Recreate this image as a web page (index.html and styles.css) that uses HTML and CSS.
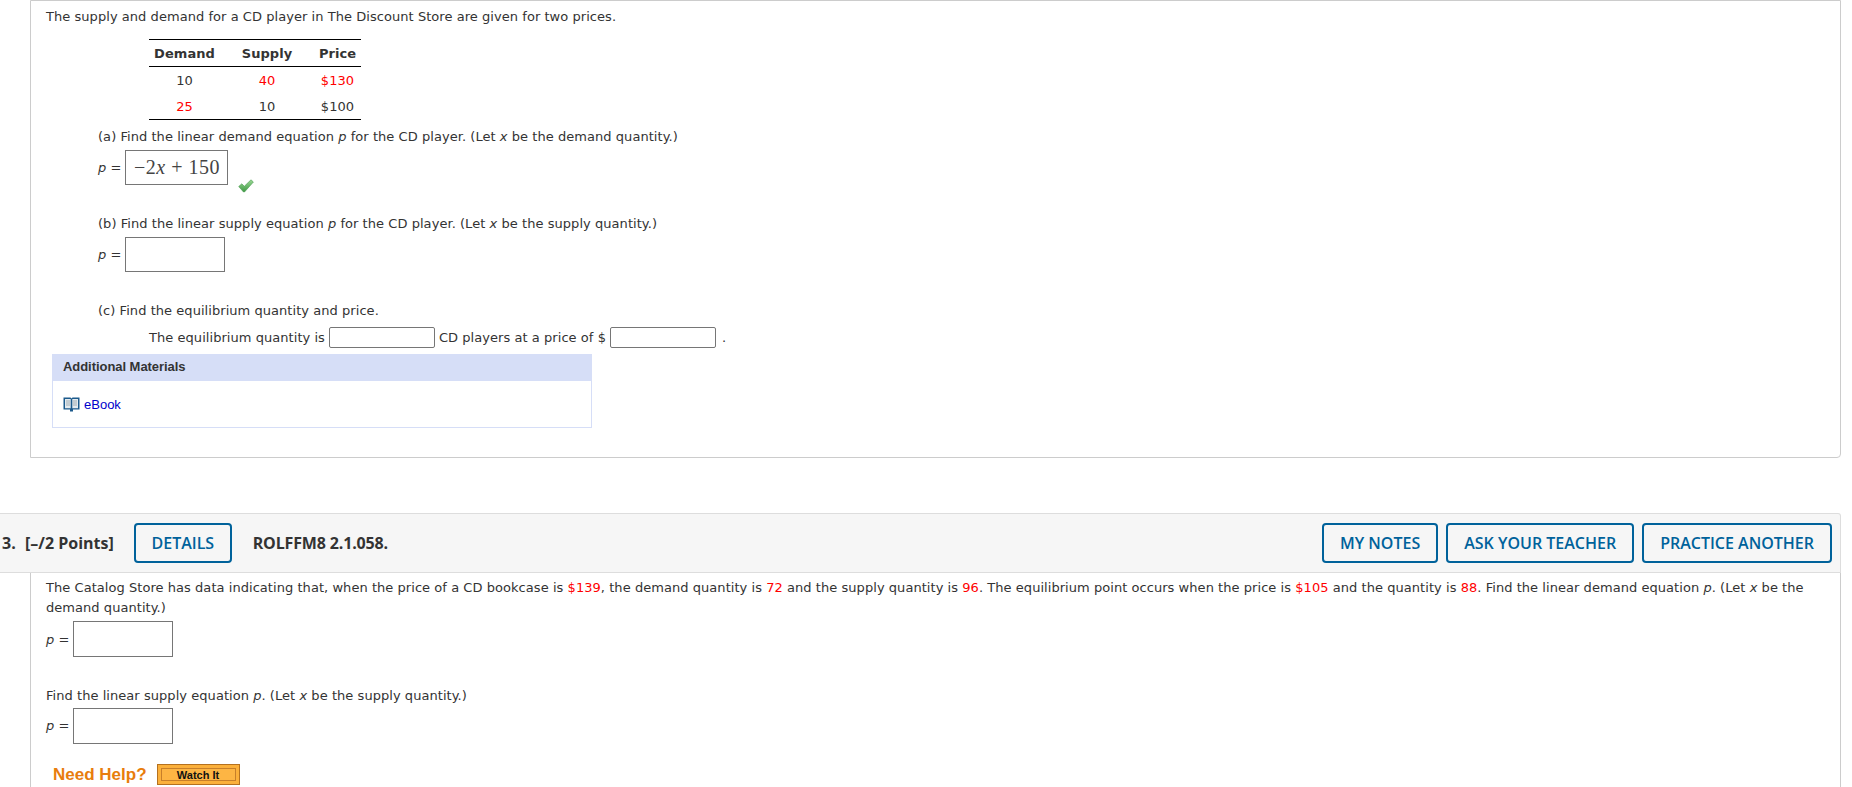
FILE: index.html
```html
<!DOCTYPE html>
<html>
<head>
  <meta charset="UTF-8">
  <title>Question 3</title>
  <link rel="stylesheet" href="styles.css">
</head>
<body>
<div class="page">
  <div class="panel first">
    <p class="line">The supply and demand for a CD player in The Discount Store are given for two prices.</p>
    <table class="prices">
      <tr><th>Demand</th><th>Supply</th><th>Price</th></tr>
      <tr><td>10</td><td class="red">40</td><td class="red">$130</td></tr>
      <tr><td class="red">25</td><td>10</td><td>$100</td></tr>
    </table>

    <p class="line part partA">(a) Find the linear demand equation <i>p</i> for the CD player. (Let <i>x</i> be the demand quantity.)</p>
    <div class="answerRow part">
      <span class="label"><i>p</i> =</span>
      <div class="box boxA"><span class="math">&minus;2<i>x</i> + 150</span></div>
      <svg class="check" width="16" height="14" viewBox="0 0 16 14">
        <defs>
          <linearGradient id="checkFill" x1="0" y1="0" x2="0" y2="1">
            <stop offset="0" stop-color="#9bd894"/>
            <stop offset="1" stop-color="#3f9a45"/>
          </linearGradient>
        </defs>
        <path d="M0.7 7.5 L3.8 4.8 L6.3 7.3 L13 0.8 L15.4 3 L6.5 13 L5.5 13 Z" fill="url(#checkFill)" stroke="#4c9a52" stroke-width="0.6"/>
      </svg>
    </div>

    <p class="line part partB">(b) Find the linear supply equation <i>p</i> for the CD player. (Let <i>x</i> be the supply quantity.)</p>
    <div class="answerRow part rowB">
      <span class="label"><i>p</i> =</span>
      <div class="box boxB"></div>
    </div>

    <p class="line part partC">(c) Find the equilibrium quantity and price.</p>
    <div class="equilRow">
      <span>The equilibrium quantity is</span>
      <div class="box small"></div>
      <span>CD players at a price of $</span>
      <div class="box small"></div>
      <span class="dot">.</span>
    </div>

    <div class="materials">
      <div class="materialsHead">Additional Materials</div>
      <div class="materialsBody">
        <svg width="17" height="15" viewBox="0 0 17 15">
          <path d="M0.5 0.5 H7.5 L8.5 1.5 L9.5 0.5 H16.5 V12.5 H10 V14.5 H7 V12.5 H0.5 Z" fill="#1c5a8c"/>
          <path d="M2 2 H7.7 V11.3 H2 Z M9.3 2 H15 V11.3 H9.3 Z" fill="#e4ebef"/>
          <path d="M3 4 H7 M3 6 H7 M3 8 H7 M10 4 H14 M10 6 H14 M10 8 H14" stroke="#a3aeb5" stroke-width="1"/>
        </svg>
        <a href="#">eBook</a>
      </div>
    </div>
  </div>

  <div class="questionBar">
    <span class="qNum">3.</span>
    <span class="qPoints">[&ndash;/2 Points]</span>
    <a class="btn details" href="#">DETAILS</a>
    <span class="qCode">ROLFFM8 2.1.058.</span>
    <div class="barRight">
      <a class="btn" href="#">MY NOTES</a>
      <a class="btn" href="#">ASK YOUR TEACHER</a>
      <a class="btn" href="#">PRACTICE ANOTHER</a>
    </div>
  </div>

  <div class="panel second">
    <p class="line">The Catalog Store has data indicating that, when the price of a CD bookcase is <span class="red">$139</span>, the demand quantity is <span class="red">72</span> and the supply quantity is <span class="red">96</span>. The equilibrium point occurs when the price is <span class="red">$105</span> and the quantity is <span class="red">88</span>. Find the linear demand equation <i>p</i>. (Let <i>x</i> be the demand quantity.)</p>
    <div class="answerRow rowD">
      <span class="label"><i>p</i> =</span>
      <div class="box boxD"></div>
    </div>
    <p class="line findSupply">Find the linear supply equation <i>p</i>. (Let <i>x</i> be the supply quantity.)</p>
    <div class="answerRow rowE">
      <span class="label"><i>p</i> =</span>
      <div class="box boxD"></div>
    </div>
    <div class="help">
      <span class="needHelp">Need Help?</span>
      <a class="watch" href="#"><span>Watch It</span></a>
    </div>
  </div>
</div>
</body>
</html>
```

FILE: styles.css
```css
html, body {
  margin: 0;
  padding: 0;
  height: 787px;
  overflow: hidden;
  background-color: #fff;
}
body {
  font-family: "DejaVu Sans", Verdana, sans-serif;
  font-size: 13px;
  letter-spacing: 0.05px;
  color: #333;
}
p {
  margin: 0;
}
.red {
  color: #f00;
}
.page {
  width: 1841px;
}
.panel {
  margin-left: 30px;
  padding-left: 15px;
  border-left: 1px solid #ccc;
  border-right: 1px solid #ccc;
}
.panel.first {
  border-top: 1px solid #ccc;
  border-bottom: 1px solid #ccc;
  border-bottom-right-radius: 4px;
  padding-top: 6px;
  padding-bottom: 29px;
}
.panel.second {
  box-sizing: border-box;
  padding-top: 5px;
  padding-right: 12px;
  height: 214px;
}
.line {
  line-height: 20px;
}
.part {
  margin-left: 52px;
}
.partA {
  margin-top: 7px;
}
.partB {
  margin-top: 29px;
}
.partC {
  margin-top: 29px;
}
.rowB {
  margin-top: 3px;
}

/* table */
.prices {
  margin: 12px 0 0 103px;
  border-collapse: collapse;
  border-top: 1px solid #000;
  border-bottom: 1px solid #000;
}
.prices th {
  height: 26px;
  padding: 0;
  text-align: center;
  border-bottom: 1px solid #000;
}
.prices td {
  height: 26px;
  padding: 0;
  text-align: center;
}
.prices th:nth-child(1) { width: 71px; }
.prices th:nth-child(2) { width: 94px; }
.prices th:nth-child(3) { width: 47px; }

/* answers */
.answerRow {
  display: flex;
  align-items: center;
  margin-top: 3px;
  height: 35px;
  position: relative;
}
.label {
  width: 27px;
}
.box {
  box-sizing: border-box;
  border: 1px solid #767676;
  background-color: #fff;
}
.boxA {
  width: 103px;
  height: 35px;
  display: flex;
  align-items: center;
  padding-left: 8px;
}
.boxB {
  width: 100px;
  height: 35px;
}
.math {
  font-family: "Liberation Serif", serif;
  font-size: 20px;
  letter-spacing: 0.5px;
  color: #444;
}
.check {
  position: absolute;
  left: 140px;
  top: 29px;
}
.equilRow {
  display: flex;
  align-items: center;
  gap: 4px;
  margin: 6px 0 0 103px;
  height: 21px;
}
.box.small {
  width: 106px;
  height: 21px;
  border-radius: 2px;
}
.dot {
  margin-left: 2px;
}

/* additional materials */
.materials {
  width: 538px;
  margin: 6px 0 0 6px;
  border: 1px solid #d6def7;
  border-top: 0;
}
.materialsHead {
  height: 27px;
  line-height: 26px;
  padding-left: 11px;
  margin: 0 -1px;
  background-color: #d6def7;
  font-family: "Liberation Sans", Arial, sans-serif;
  font-size: 13px;
  font-weight: bold;
  letter-spacing: -0.05px;
  color: #333;
}
.materialsBody {
  display: flex;
  align-items: center;
  gap: 4px;
  height: 46px;
  padding: 0 0 0 10px;
  font-family: "Liberation Sans", Arial, sans-serif;
  font-size: 13px;
  letter-spacing: 0;
}
.materialsBody a {
  color: #00c;
  text-decoration: none;
}

/* question header */
.questionBar {
  display: flex;
  align-items: center;
  box-sizing: border-box;
  height: 60px;
  margin-top: 55px;
  padding-right: 8px;
  background-color: #f6f6f6;
  border-top: 1px solid #ddd;
  border-bottom: 1px solid #ddd;
  border-right: 1px solid #ddd;
  border-top-right-radius: 3px;
  font-family: "Open Sans", sans-serif;
  font-size: 16px;
  font-weight: 600;
  letter-spacing: 0;
  color: #333;
}
.qNum {
  margin-left: 2px;
  width: 23px;
  font-weight: 700;
}
.qPoints {
  width: 109px;
  font-weight: 700;
}
.btn {
  box-sizing: border-box;
  display: block;
  height: 40px;
  line-height: 36px;
  padding: 0 16px;
  border: 2px solid #00629b;
  border-radius: 4px;
  color: #00629b;
  text-decoration: none;
}
.btn.details {
  padding: 0 15.5px;
}
.qCode {
  margin-left: 21px;
  font-weight: 700;
  letter-spacing: -0.15px;
}
.barRight {
  display: flex;
  gap: 8px;
  margin-left: auto;
}

/* second question */
.rowD {
  height: 36px;
}
.boxD {
  width: 100px;
  height: 36px;
}
.findSupply {
  margin-top: 29px;
}
.rowE {
  margin-top: 2px;
}
.help {
  display: flex;
  align-items: center;
  gap: 10px;
  margin: 21px 0 0 7px;
}
.needHelp {
  font-family: "Liberation Sans", Arial, sans-serif;
  font-size: 17px;
  font-weight: bold;
  letter-spacing: 0;
  color: #e87d0d;
}
.watch {
  box-sizing: border-box;
  display: block;
  width: 83px;
  height: 21px;
  padding: 3px;
  border: 1px solid #b5711f;
  background-color: #fbb03b;
  text-decoration: none;
}
.watch span {
  display: block;
  box-sizing: border-box;
  height: 13px;
  line-height: 12px;
  text-align: center;
  border: 1px solid #c77f2a;
  font-family: "Liberation Sans", Arial, sans-serif;
  font-size: 11px;
  font-weight: bold;
  letter-spacing: 0;
  color: #111;
  background-color: #fdb544;
}
```
